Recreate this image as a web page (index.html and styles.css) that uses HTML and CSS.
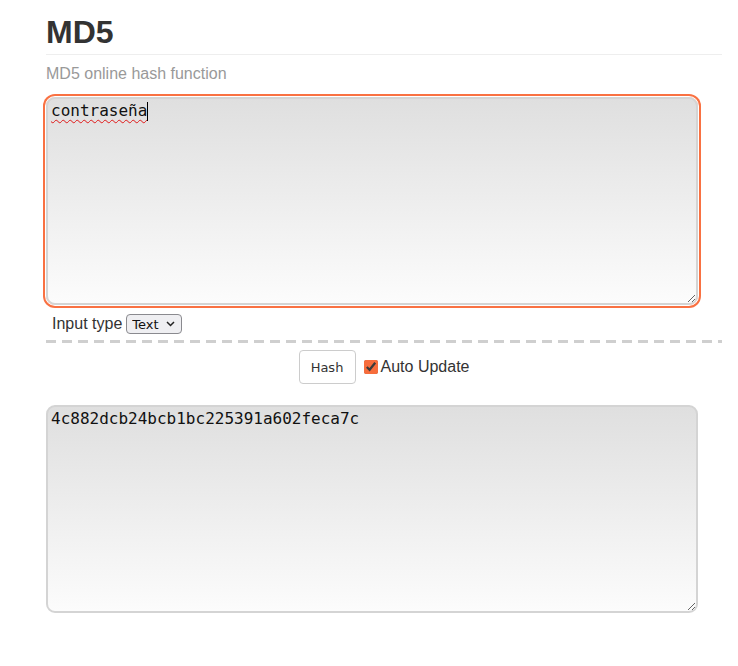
FILE: index.html
```html
<!DOCTYPE html>
<html>
<head>
<meta charset="utf-8">
<title>MD5</title>
<link rel="stylesheet" href="styles.css">
</head>
<body>
<div class="page">
  <h1 class="title">MD5</h1>
  <p class="subtitle">MD5 online hash function</p>
  <div class="field">
    <textarea class="box box-input" spellcheck="false">contraseña</textarea>
    <span class="caret"></span>
  </div>
  <div class="type-row">
    <label class="type-label">Input type</label>
    <span class="select-wrap">
      <select class="type-select"><option>Text</option></select>
      <svg class="chev" width="9" height="6" viewBox="0 0 9 6"><path d="M1 1l3.5 3.5L8 1" fill="none" stroke="#222" stroke-width="1.5"/></svg>
    </span>
  </div>
  <div class="divider"></div>
  <div class="actions">
    <button class="hash-btn">Hash</button>
    <label class="auto"><input type="checkbox" class="auto-check" checked>Auto Update</label>
  </div>
  <textarea class="box box-output" spellcheck="false">4c882dcb24bcb1bc225391a602feca7c</textarea>
</div>
</body>
</html>
```
FILE: styles.css
```css
html, body {
  margin: 0;
  padding: 0;
  background: #fff;
}
body {
  font-family: "Liberation Sans", Arial, sans-serif;
  color: #333;
}
.page {
  width: 676px;
  margin-left: 46px;
  display: flex;
  flex-direction: column;
}
.title {
  margin: 13px 0 0;
  font-size: 32px;
  line-height: 38px;
  font-weight: bold;
  color: #333;
  padding-bottom: 3px;
  border-bottom: 1px solid #eee;
}
.subtitle {
  margin: 9px 0 0;
  font-size: 16px;
  line-height: 19px;
  color: #999;
}
.field {
  position: relative;
  margin-top: 14px;
}
.box {
  display: block;
  box-sizing: border-box;
  width: 652px;
  height: 208px;
  margin: 0;
  padding: 2px 3px;
  border: 2px solid #d4d4d4;
  border-radius: 9px;
  background: linear-gradient(to bottom, #dfdfdf 0%, #fcfcfc 100%);
  font-family: "DejaVu Sans Mono", monospace;
  font-size: 16px;
  line-height: 19px;
  color: #111;
  resize: vertical;
  outline: none;
}
.box-input {
  box-shadow: 0 0 0 1px #fff, 0 0 0 3px #f97142;
  text-decoration: underline wavy #e01818;
  text-decoration-thickness: 1px;
  text-underline-offset: 3px;
}
.caret {
  position: absolute;
  left: 101px;
  top: 5px;
  width: 1px;
  height: 19px;
  background: #000;
}
.box-output {
  margin-top: 21px;
}
.type-row {
  display: flex;
  align-items: center;
  gap: 4px;
  margin-top: 9px;
  padding-left: 6px;
  height: 20px;
}
.type-label {
  font-size: 16px;
  color: #333;
}
.select-wrap {
  position: relative;
  display: inline-flex;
}
.type-select {
  appearance: none;
  -webkit-appearance: none;
  box-sizing: border-box;
  width: 56px;
  height: 20px;
  margin: 0;
  padding: 0 0 0 5px;
  border: 1px solid #8a8a8f;
  border-radius: 4px;
  background: #efeff2;
  font-family: "DejaVu Sans", sans-serif;
  font-size: 13px;
  color: #111;
}
.chev {
  position: absolute;
  right: 7px;
  top: 7px;
  pointer-events: none;
}
.divider {
  margin-top: 6px;
  height: 3px;
  background: repeating-linear-gradient(to right, #cfcfcf 0, #cfcfcf 10px, transparent 10px, transparent 16px);
}
.actions {
  display: flex;
  justify-content: center;
  align-items: center;
  margin-top: 7px;
  gap: 8px;
}
.hash-btn {
  height: 34px;
  width: 57px;
  padding: 0;
  background: #fff;
  border: 1px solid #ccc;
  border-radius: 4px;
  font-family: "DejaVu Sans", sans-serif;
  font-size: 13px;
  color: #333;
}
.auto {
  display: flex;
  align-items: center;
  font-size: 16px;
  color: #333;
}
.auto-check {
  accent-color: #f76d3c;
  margin: 0 3px 0 0;
  width: 14px;
  height: 14px;
}
```
